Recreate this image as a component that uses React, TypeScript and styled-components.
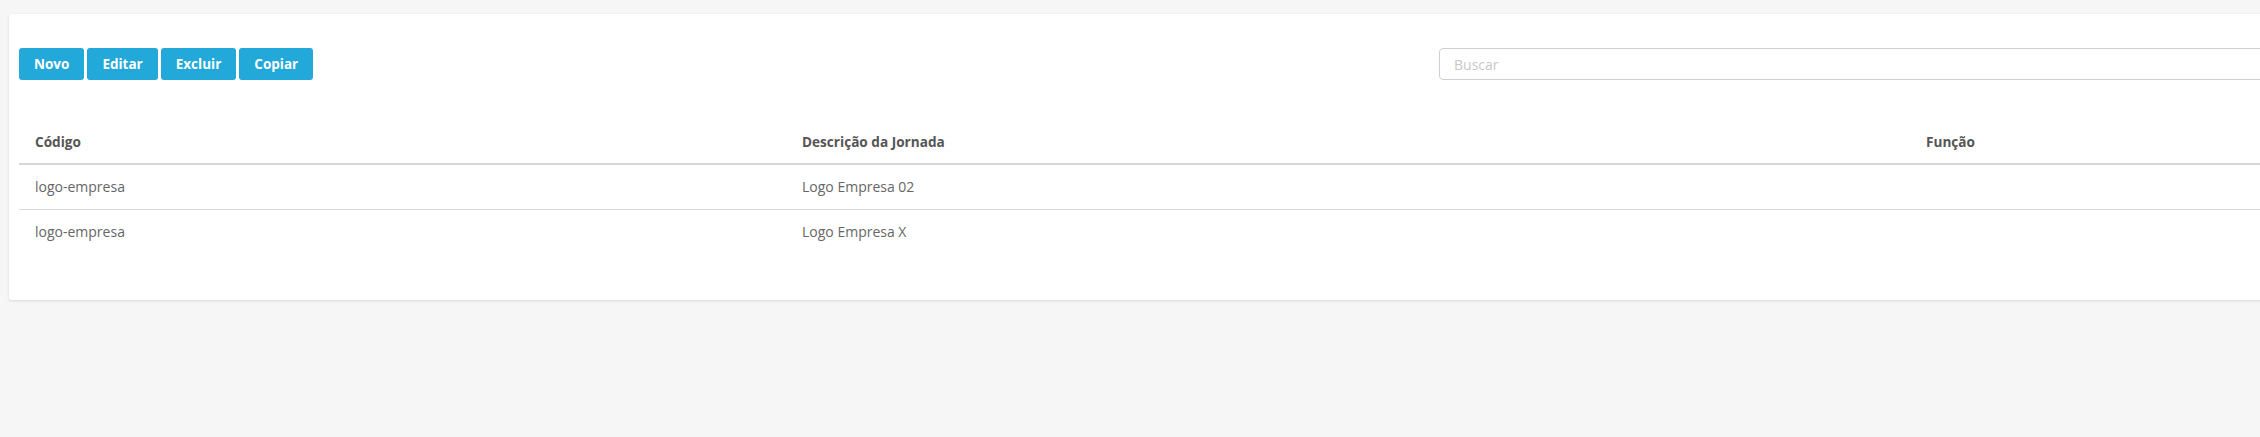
import React from "react";
import styled, { createGlobalStyle } from "styled-components";

const Global = createGlobalStyle`
  html, body { margin: 0; padding: 0; background: #f6f6f6; overflow: hidden; }
  body { font-family: "Open Sans", "Noto Sans", sans-serif; }
  * { box-sizing: border-box; }
`;

const Page = styled.div`
  width: 2260px;
  height: 437px;
  padding: 14px 0 0 9px;
  overflow: hidden;
`;

const Card = styled.div`
  width: 2300px;
  background: #fff;
  border-radius: 3px;
  box-shadow: 0 1px 3px rgba(0, 0, 0, 0.12);
  padding: 34px 10px 46px 10px;
`;

const Toolbar = styled.div`
  display: flex;
  align-items: center;
  justify-content: space-between;
`;

const ButtonGroup = styled.div`
  display: flex;
  gap: 3px;
`;

const ActionButton = styled.button`
  height: 32px;
  padding: 0 15px;
  border: none;
  border-radius: 3px;
  background: #23a8da;
  color: #fff;
  font-family: "Open Sans", sans-serif;
  font-weight: 700;
  font-size: 13.5px;
  cursor: pointer;
`;

const SearchInput = styled.input`
  width: 860px;
  height: 32px;
  border: 1px solid #cfcfcf;
  border-radius: 4px;
  padding: 0 14px;
  font-family: "Open Sans", sans-serif;
  font-size: 14px;
  color: #555;
  &::placeholder { color: #c8c8c8; }
`;

const Table = styled.table`
  margin-top: 40px;
  width: 2290px;
  border-collapse: collapse;
  table-layout: fixed;
`;

const HeadCell = styled.th<{ $w?: number }>`
  width: ${(p) => (p.$w ? `${p.$w}px` : "auto")};
  text-align: left;
  height: 44px;
  padding: 0 16px;
  font-size: 13.6px;
  font-weight: 700;
  color: #555;
  border-bottom: 2px solid #d6d6d6;
`;

const Cell = styled.td`
  height: 45px;
  padding: 0 16px;
  font-size: 14px;
  color: #666;
`;

const Row = styled.tr<{ $line?: boolean }>`
  td { border-bottom: ${(p) => (p.$line ? "1px solid #d9d9d9" : "none")}; }
`;

const rows = [
  { codigo: "logo-empresa", desc: "Logo Empresa 02", funcao: "" },
  { codigo: "logo-empresa", desc: "Logo Empresa X", funcao: "" },
];

export default function App() {
  return (
    <>
      <Global />
      <Page>
        <Card>
          <Toolbar>
            <ButtonGroup>
              <ActionButton>Novo</ActionButton>
              <ActionButton>Editar</ActionButton>
              <ActionButton>Excluir</ActionButton>
              <ActionButton>Copiar</ActionButton>
            </ButtonGroup>
            <SearchInput placeholder="Buscar" />
          </Toolbar>
          <Table>
            <thead>
              <tr>
                <HeadCell $w={767}>Código</HeadCell>
                <HeadCell $w={1124}>Descrição da Jornada</HeadCell>
                <HeadCell>Função</HeadCell>
              </tr>
            </thead>
            <tbody>
              {rows.map((r, i) => (
                <Row key={i} $line={i < rows.length - 1}>
                  <Cell>{r.codigo}</Cell>
                  <Cell>{r.desc}</Cell>
                  <Cell>{r.funcao}</Cell>
                </Row>
              ))}
            </tbody>
          </Table>
        </Card>
      </Page>
    </>
  );
}
